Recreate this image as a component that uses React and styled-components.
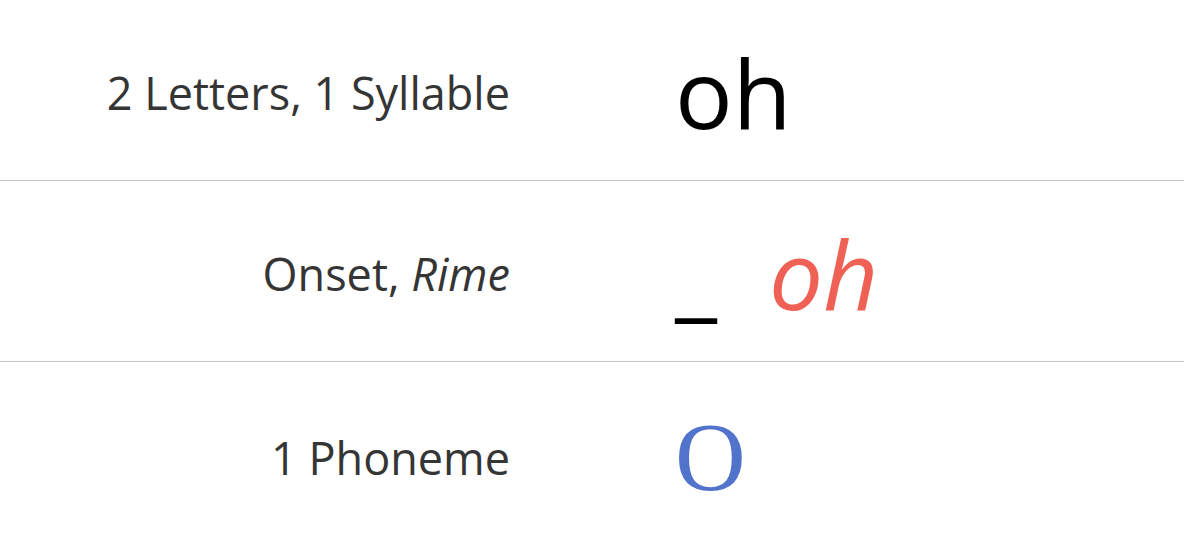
import React from "react";
import styled, { createGlobalStyle } from "styled-components";

const GlobalStyle = createGlobalStyle`
  body {
    margin: 0;
    background: #fff;
    font-family: "Open Sans", "Liberation Sans", sans-serif;
  }
`;

const Table = styled.div`
  width: 100%;
  display: flex;
  flex-direction: column;
`;

const Row = styled.div`
  box-sizing: border-box;
  height: ${(props) => (props.$last ? "187px" : "181px")};
  padding-top: 5px;
  display: grid;
  grid-template-columns: 510px 1fr;
  column-gap: 165px;
  align-items: center;
  border-bottom: ${(props) => (props.$last ? "none" : "1px solid #c2c2c2")};
`;

const Label = styled.div`
  text-align: right;
  font-size: 45px;
  color: #353535;
  line-height: 1.36;

  em {
    font-style: italic;
  }
`;

const Value = styled.div`
  display: flex;
  align-items: baseline;
  font-size: 96px;
  line-height: 1.36;
`;

const Split = styled.div`
  display: flex;
  align-items: baseline;
  gap: 52px;
`;

const Word = styled.span`
  color: #000;
`;

const Rime = styled.span`
  font-style: italic;
  color: #ef6154;
`;

const Phoneme = styled.span`
  font-family: "Liberation Serif", "Times New Roman", serif;
  font-size: 98px;
  color: #5273cb;
`;

function App() {
  const rows = [
    { label: <>2 Letters, 1 Syllable</>, value: <Word>oh</Word> },
    {
      label: (
        <>
          Onset, <em>Rime</em>
        </>
      ),
      value: (
        <Split>
          <Word>_</Word>
          <Rime>oh</Rime>
        </Split>
      ),
    },
    { label: <>1 Phoneme</>, value: <Phoneme>O</Phoneme> },
  ];

  return (
    <>
      <GlobalStyle />
      <Table>
        {rows.map((row, i) => (
          <Row key={i} $last={i === rows.length - 1}>
            <Label>{row.label}</Label>
            <Value>{row.value}</Value>
          </Row>
        ))}
      </Table>
    </>
  );
}

export default App;
